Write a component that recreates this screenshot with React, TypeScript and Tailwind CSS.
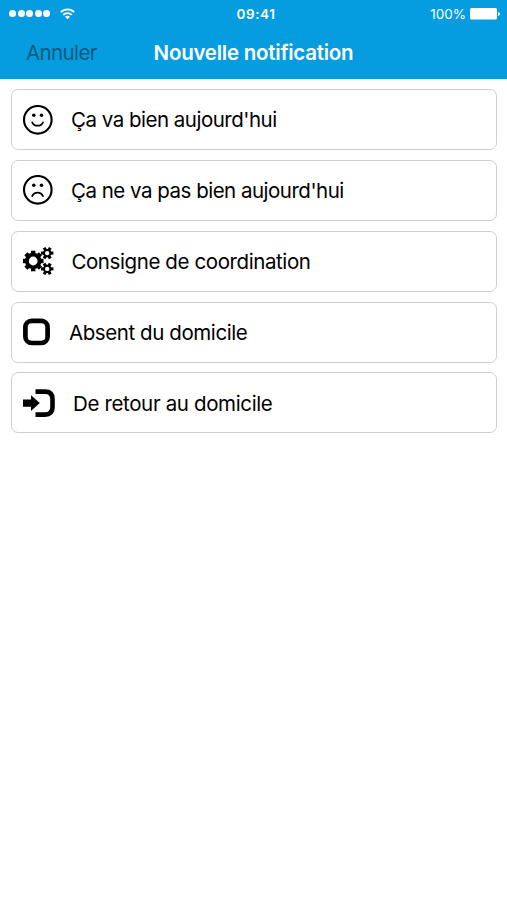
import type { ReactNode } from 'react';

type GearProps = { cx: number; cy: number; radius: number; teeth: number; ring: number; tooth: number };

const Gear = ({ cx, cy, radius, teeth, ring, tooth }: GearProps) => (
  <g transform={`translate(${cx} ${cy})`}>
    <circle r={radius - 2 - ring / 2} fill="none" strokeWidth={ring} />
    {Array.from({ length: teeth }, (_, i) => (
      <path
        key={i}
        d={`M0 ${-radius}V${-(radius - 3)}`}
        strokeWidth={tooth}
        transform={`rotate(${(360 / teeth) * i + (teeth === 6 ? 30 : 0)})`}
      />
    ))}
  </g>
);

const Face = ({ sad = false }: { sad?: boolean }) => (
  <svg width="30" height="30" viewBox="0 0 30 30" fill="none" stroke="currentColor">
    <circle cx="14.8" cy="14.8" r="13.8" strokeWidth="2.1" />
    <circle cx="10.8" cy="10.3" r="1.8" fill="currentColor" stroke="none" />
    <circle cx="18.5" cy="10.3" r="1.8" fill="currentColor" stroke="none" />
    <path d={sad ? 'M9.2 21.2C11.3 16.3 17.9 16.3 20 21.2' : 'M9.2 17.3C11.3 21.8 17.9 21.8 20 17.3'} strokeWidth="1.7" strokeLinecap="round" />
  </svg>
);

const Gears = () => (
  <svg width="31" height="30" viewBox="0 0 31 30" stroke="currentColor">
    <Gear cx={10.2} cy={15} radius={10.3} teeth={8} ring={3.9} tooth={4.4} />
    <Gear cx={24.2} cy={7.1} radius={6.2} teeth={6} ring={2} tooth={3.1} />
    <Gear cx={24.2} cy={22.9} radius={6.2} teeth={6} ring={2} tooth={3.1} />
  </svg>
);

const Square = () => (
  <svg width="28" height="28" viewBox="0 0 28 28" fill="none" stroke="currentColor">
    <rect x="2.4" y="2.8" width="22.2" height="22.2" rx="6.2" strokeWidth="4.7" />
  </svg>
);

const Enter = () => (
  <svg width="32" height="28" viewBox="0 0 32 28" fill="none">
    <path d="M12.5 2.6H22Q29.5 2.6 29.5 10.1V18.3Q29.5 25.6 22 25.6H12.5" stroke="currentColor" strokeWidth="4.6" />
    <path d="M0 10.5H8V6.3L16.8 14.1L8 21.9V17.7H0Z" fill="currentColor" />
  </svg>
);

const items: { label: string; icon: ReactNode; text: string }[] = [
  { label: "Ça va bien aujourd'hui", icon: <Face />, text: 'ml-[18px] tracking-[-0.5px]' },
  { label: "Ça ne va pas bien aujourd'hui", icon: <Face sad />, text: 'ml-[18px] tracking-[-0.5px]' },
  { label: 'Consigne de coordination', icon: <Gears />, text: 'ml-[17.4px] tracking-[-0.4px]' },
  { label: 'Absent du domicile', icon: <Square />, text: 'ml-[18px] tracking-[-0.42px]' },
  { label: 'De retour au domicile', icon: <Enter />, text: 'ml-[18px] tracking-[-0.36px]' },
];

const StatusBar = () => (
  <div className="grid h-[27px] grid-cols-3 items-center pr-[7px] pl-[9px] text-[13.5px]">
    <div className="flex items-center gap-[10px]">
      <div className="flex gap-[1.6px]">
        {[0, 1, 2, 3, 4].map(i => (
          <span key={i} className="size-[7px] rounded-full bg-white" />
        ))}
      </div>
      <svg width="15" height="12" viewBox="0 0 15 12" fill="none" stroke="currentColor" strokeWidth="1.9">
        <path d="M.8 4.2C4.5.4 10.5.4 14.2 4.2M3.2 6.9C5.6 4.5 9.4 4.5 11.8 6.9" />
        <path d="M7.5 11.2L5 8.7Q7.5 6.8 10 8.7Z" fill="currentColor" stroke="none" />
      </svg>
    </div>
    <span className="mt-px pl-[3px] text-center font-semibold tracking-[0.6px]">09:41</span>
    <div className="flex items-center justify-end gap-1">
      <span className="mt-px">100%</span>
      <svg width="30" height="12" viewBox="0 0 30 12" fill="currentColor">
        <rect width="27" height="11.5" rx="1.5" />
        <path d="M28 4Q30 4.5 30 6T28 8Z" />
      </svg>
    </div>
  </div>
);

export default function App() {
  return (
    <div className="min-h-screen bg-white font-['Inter','Liberation_Sans',sans-serif] text-black">
      <header className="h-[79px] bg-[#059de0] text-white">
        <StatusBar />
        <div className="grid h-[52px] grid-cols-[100px_1fr_100px] items-center">
          <button className="pl-[26px] text-left text-[20.5px] tracking-[-0.6px] text-[#065a80]">Annuler</button>
          <h1 className="text-center text-[20.5px] font-semibold tracking-[-0.25px] whitespace-nowrap">Nouvelle notification</h1>
        </div>
      </header>
      <main className="flex flex-col gap-[9.85px] pt-[10px] pr-[10px] pl-[11px]">
        {items.map(({ label, icon, text }) => (
          <button key={label} className="flex h-[61px] items-center rounded-[7px] border border-[#cfcfcf] pl-[11px] text-left">
            {icon}
            <span className={`mt-[2px] text-[20.5px] whitespace-nowrap ${text}`}>{label}</span>
          </button>
        ))}
      </main>
    </div>
  );
}
